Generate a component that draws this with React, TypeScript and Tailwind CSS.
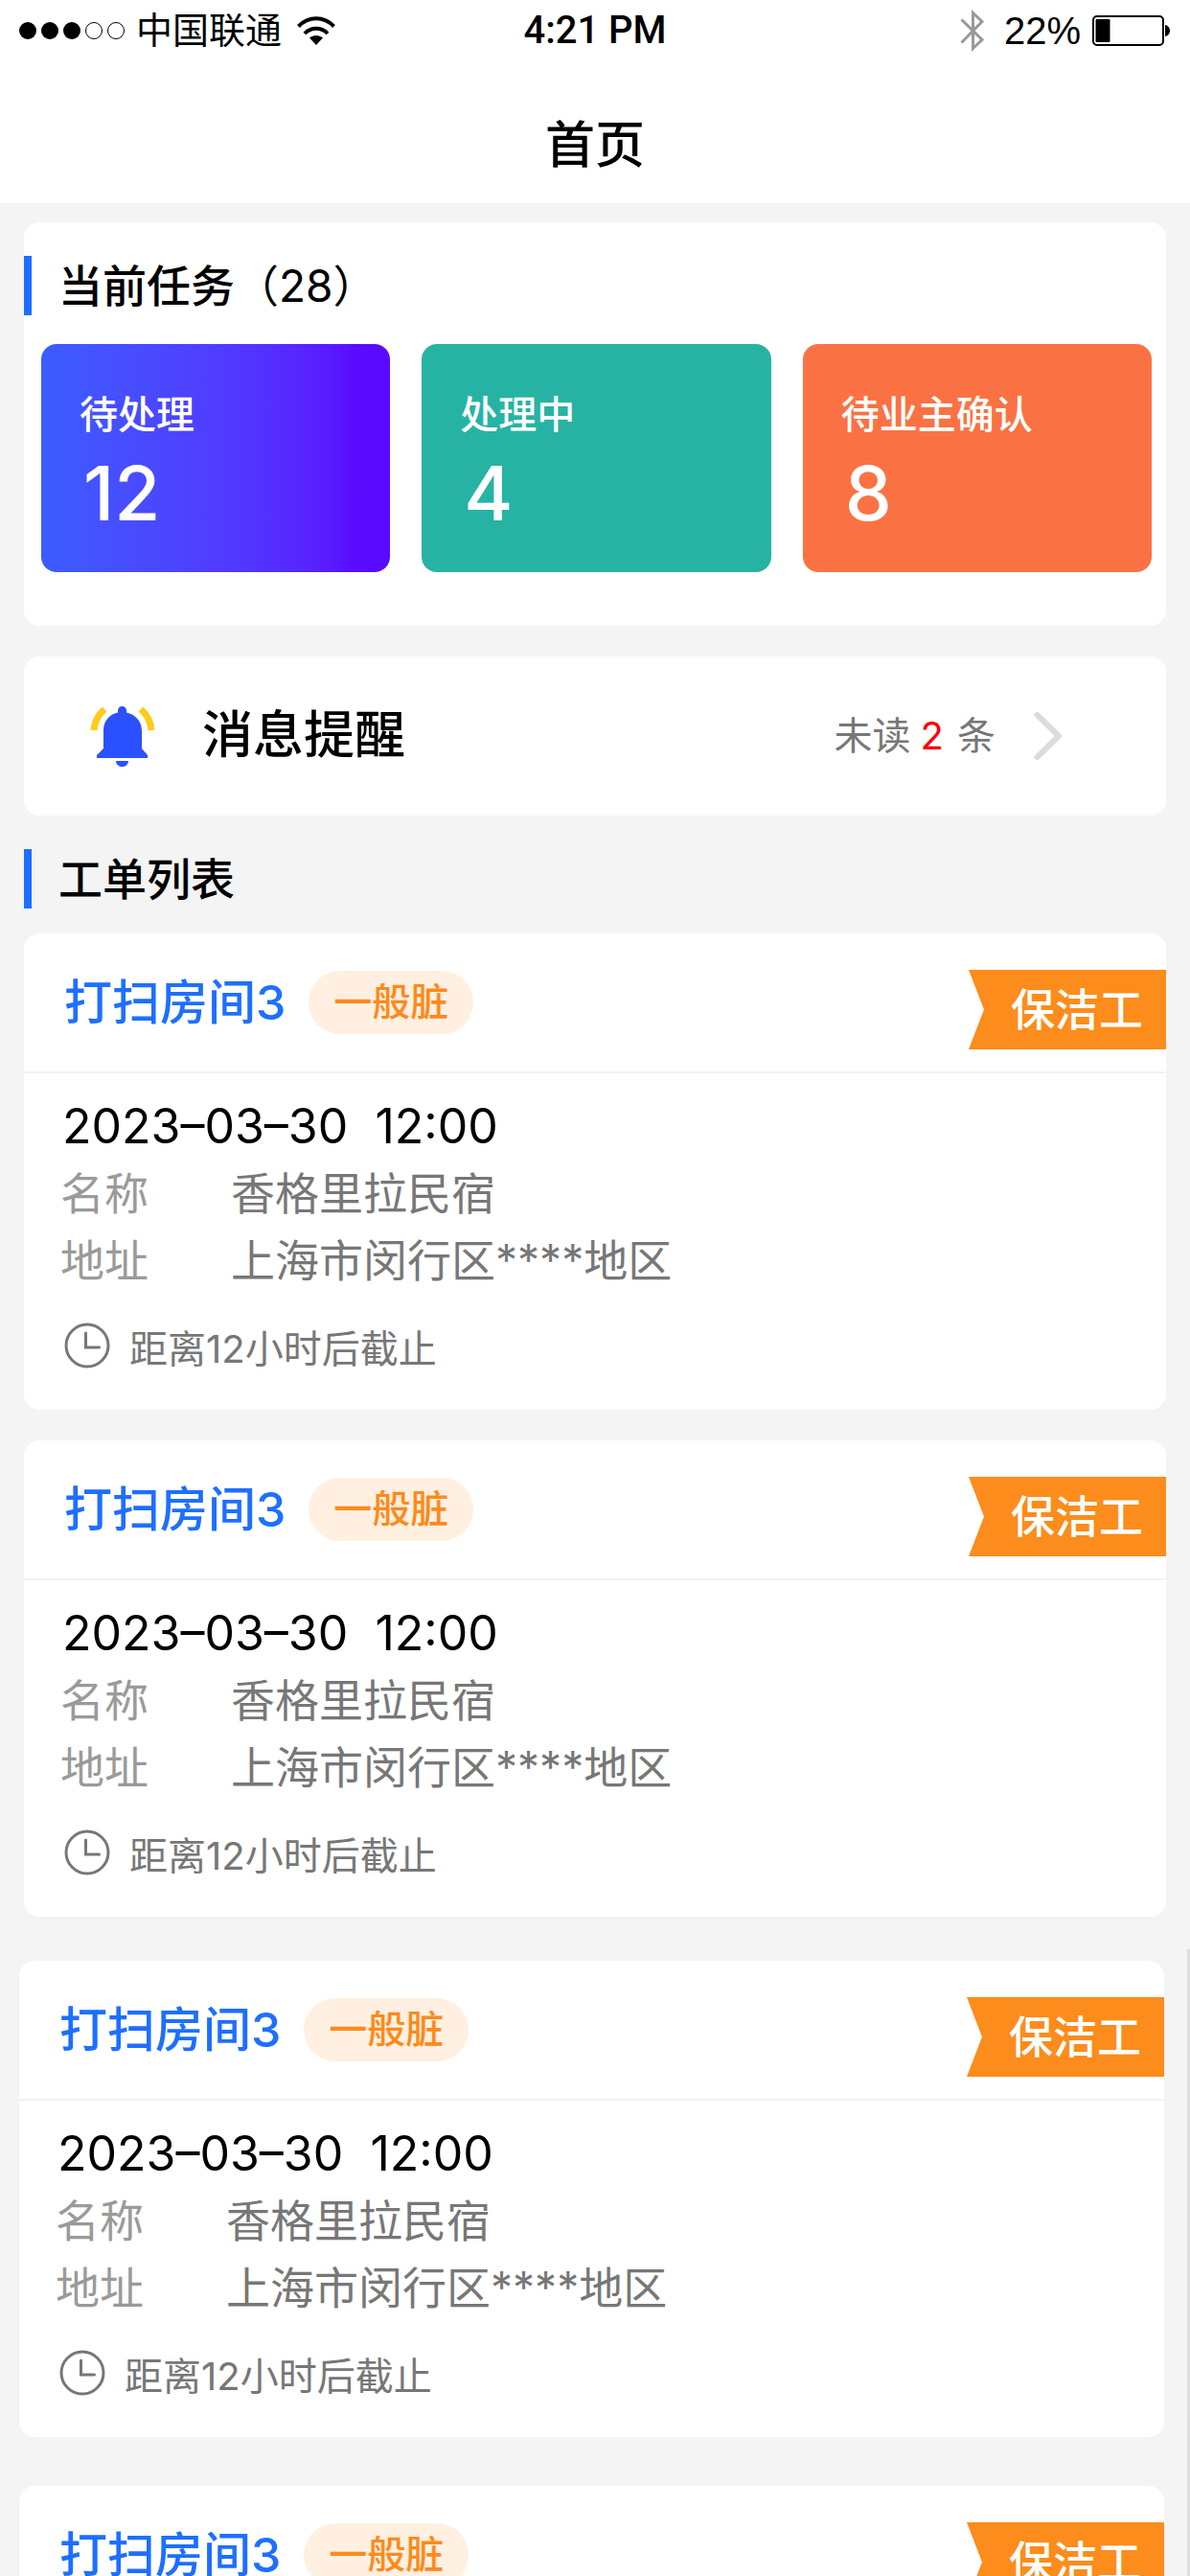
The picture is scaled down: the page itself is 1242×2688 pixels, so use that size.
import React from "react";

type Tile = { label: string; count: number; color: string };

const tiles: Tile[] = [
  { label: "待处理", count: 12, color: "bg-linear-to-r from-[#3c5cff] to-[#5a0aff] to-90%" },
  { label: "处理中", count: 4, color: "bg-[#27b3a4]" },
  { label: "待业主确认", count: 8, color: "bg-[#fa7243]" },
];

const order = {
  title: "打扫房间3",
  level: "一般脏",
  role: "保洁工",
  time: "2023–03–30  12:00",
  name: "香格里拉民宿",
  address: "上海市闵行区****地区",
  deadline: "距离12小时后截止",
};

function Wifi() {
  return (
    <svg width="40" height="30" viewBox="0 0 40 30" fill="none" stroke="#000" strokeWidth="4" aria-hidden="true">
      <path d="M1.500 10.500C12-.5 28-.5 38.500 10.500" />
      <path d="M8 18C14.500 11 25.500 11 32 18" />
      <path d="M13 22.500C17 19 23 19 27 22.500L20 30Z" fill="#000" stroke="none" />
    </svg>
  );
}

function Bluetooth() {
  return (
    <svg width="26" height="44" viewBox="0 0 26 44" fill="none" stroke="#999" strokeWidth="3" aria-hidden="true">
      <path d="M1.500 10.500L23 31.500L13.500 40.500V3.500L23 12.500L1.500 34.500" />
    </svg>
  );
}

function Battery() {
  return (
    <svg width="82" height="32" viewBox="0 0 82 32" aria-hidden="true">
      <rect x="1" y="1" width="73" height="30" rx="4" fill="none" stroke="#000" strokeWidth="2" />
      <rect x="3.500" y="4" width="15" height="24" rx="1" />
      <path d="M76 10C79 10.500 81 13 81 16S79 21.500 76 22Z" />
    </svg>
  );
}

function Bell() {
  return (
    <svg width="68" height="64" viewBox="0 0 68 64" fill="#2b50ff" aria-hidden="true">
      <path d="M7 55V52L14 45V27C14 16 20 9.500 29 7.500V5.500A4.500 4.500 0 0 1 38 5.500V7.500C47 9.500 54 16 54 27V45L60 52V55Z" />
      <path d="M27 58H40C39.500 62 37 64 33.500 64S27.500 62 27 58Z" />
      <g fill="none" stroke="#ffca1c" strokeWidth="7">
        <path d="M4 26Q5 13 15 4" />
        <path d="M64 26Q63 13 53 4" />
      </g>
    </svg>
  );
}

function Chevron() {
  return (
    <svg width="30" height="52" viewBox="0 0 30 52" fill="none" stroke="#dcdcdc" strokeWidth="6" strokeLinecap="round" strokeLinejoin="round" aria-hidden="true">
      <path d="M3.500 4L26 26L3.500 48" />
    </svg>
  );
}

function Clock() {
  return (
    <svg width="48" height="48" viewBox="0 0 48 48" fill="none" stroke="#777" strokeWidth="3" aria-hidden="true">
      <circle cx="24" cy="24" r="22" />
      <path d="M22.500 11V26H36.500" strokeLinecap="round" />
    </svg>
  );
}

function SectionTitle({ children }: { children: React.ReactNode }) {
  return (
    <div className="flex items-center">
      <span className="h-[62px] w-2 bg-[#1e6fff]" />
      <h2 className="ml-7 text-[46px] leading-[62px] font-medium">{children}</h2>
    </div>
  );
}

function OrderCard() {
  return (
    <article className="rounded-2xl bg-white">
      <header className="flex h-[146px] items-center border-b-2 border-[#f2f2f2] pl-[42px]">
        <h3 className="text-[50px] leading-[66px] font-medium text-[#1e6fff]">{order.title}</h3>
        <span className="ml-6 rounded-full bg-[#fff0e1] px-[26px] text-[40px] leading-[66px] font-medium text-[#fd8a1b]">
          {order.level}
        </span>
        <span className="mt-[38px] ml-auto self-start bg-[#fc8c1b] pr-6 pl-11 text-[46px] leading-[83px] font-medium text-white [clip-path:polygon(0_0,100%_0,100%_100%,0_100%,16px_50%)]">
          {order.role}
        </span>
      </header>
      <div className="px-[38px] pt-5 pb-[35px] leading-[70px]">
        <p className="pl-0.5 text-[50px] whitespace-pre">{order.time}</p>
        <dl className="grid grid-cols-[178px_1fr] text-[46px]">
          <dt className="text-[#9a9a9a]">名称</dt>
          <dd className="text-[#777]">{order.name}</dd>
          <dt className="text-[#9a9a9a]">地址</dt>
          <dd className="text-[#777]">{order.address}</dd>
        </dl>
        <p className="mt-[30px] flex gap-5 pl-1 text-[40px] leading-[56px] text-[#777]">
          <Clock />
          <span>{order.deadline}</span>
        </p>
      </div>
    </article>
  );
}

export default function App() {
  return (
    <div className="flex h-screen flex-col overflow-hidden bg-[#f4f4f4] font-['Inter','Noto_Sans_CJK_SC',sans-serif] text-black">
      <header className="bg-white">
        <div className="grid h-16 grid-cols-[1fr_auto_1fr] items-center px-5 font-['Liberation_Sans','Noto_Sans_CJK_SC',sans-serif]">
          <div className="flex items-center">
            <div className="flex gap-[5px]">
              <span className="size-[18px] rounded-full bg-black" />
              <span className="size-[18px] rounded-full bg-black" />
              <span className="size-[18px] rounded-full bg-black" />
              <span className="size-[18px] rounded-full border border-black" />
              <span className="size-[18px] rounded-full border border-black" />
            </div>
            <span className="mr-4 ml-3 text-[38px] leading-[64px]">中国联通</span>
            <Wifi />
          </div>
          <span className="font-['Roboto',sans-serif] text-[40px] font-medium">4:21 PM</span>
          <div className="flex items-center justify-end">
            <Bluetooth />
            <span className="mr-3 ml-5 text-[40px]">22%</span>
            <Battery />
          </div>
        </div>
        <h1 className="pt-[50px] pb-[22px] text-center text-[52px] leading-[76px] font-medium">首页</h1>
      </header>

      <main className="flex min-h-0 flex-1 flex-col pt-5">
        <div className="mx-[25px]">
          <section className="rounded-2xl bg-white pt-[35px] pb-14">
            <SectionTitle>
              当前任务<span className="font-normal">（28）</span>
            </SectionTitle>
            <div className="mt-[30px] grid grid-cols-3 gap-[33px] pr-[15px] pl-[18px]">
              {tiles.map((tile) => (
                <button key={tile.label} type="button" className={`rounded-2xl px-10 pt-[42px] pb-8 text-left text-white ${tile.color}`}>
                  <span className="block text-[40px] leading-[64px] font-medium">{tile.label}</span>
                  <span className="block pl-1 text-[78px] leading-[100px] font-medium">{tile.count}</span>
                </button>
              ))}
            </div>
          </section>

          <a href="#messages" className="mt-8 flex h-[166px] items-center rounded-2xl bg-white pr-[108px] pl-[69px]">
            <Bell />
            <span className="ml-[49px] text-[53px] font-medium">消息提醒</span>
            <span className="mr-10 ml-auto flex gap-[10px] text-[40px] text-[#777]">
              未读<span className="text-[#ff0000]">2</span>
              <span className="ml-1">条</span>
            </span>
            <Chevron />
          </a>

          <div className="mt-[35px]">
            <SectionTitle>工单列表</SectionTitle>
          </div>
          <div className="mt-[26px] grid gap-8">
            <OrderCard />
            <OrderCard />
          </div>
        </div>

        <div className="mt-[34px] min-h-0 flex-1 border-r-[3px] border-[#dedede] pt-3 pr-6 pl-5">
          <div className="grid gap-[51px]">
            <OrderCard />
            <OrderCard />
          </div>
        </div>
      </main>
    </div>
  );
}
